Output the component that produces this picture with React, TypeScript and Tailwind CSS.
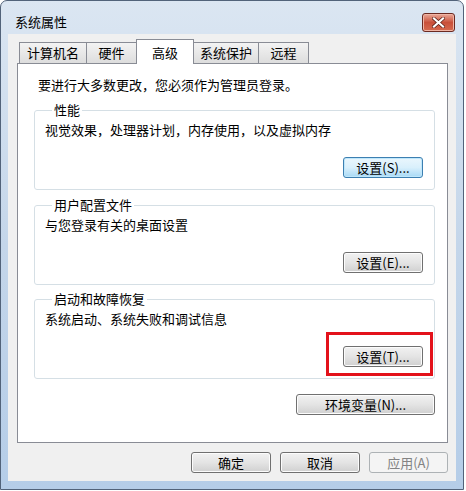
import type { ReactNode } from "react"

type BtnProps = {
  children: ReactNode
  variant?: "normal" | "default" | "disabled"
  className?: string
}

function Btn({ children, variant = "normal", className = "" }: BtnProps) {
  const look =
    variant === "default"
      ? "border-[#3c7fb1] bg-gradient-to-b from-[#eaf6fd] via-[#d9f0fc] to-[#a7d9f5] shadow-[inset_0_0_0_1px_#bfe7fb]"
      : variant === "disabled"
        ? "border-[#adb2b5] bg-[#f4f4f4] text-[#838383]"
        : "border-[#707070] bg-gradient-to-b from-[#f2f2f2] via-[#e4e4e4] to-[#d0d0d0] shadow-[inset_0_0_0_1px_#fcfcfc]"
  return (
    <div
      className={`h-[21px] flex items-center justify-center rounded-[3px] border leading-none ${look} ${className}`}
    >
      {children}
    </div>
  )
}

function Tab({ label, active = false, className = "" }: { label: string; active?: boolean; className?: string }) {
  if (active) {
    return (
      <div
        className={`relative z-10 -mb-px h-[25px] flex items-start justify-center pt-[3px] border border-b-0 border-[#898c95] bg-white ${className}`}
      >
        {label}
      </div>
    )
  }
  return (
    <div
      className={`h-[21px] flex items-center justify-center border border-b-0 border-[#898c95] bg-gradient-to-b from-[#f3f3f3] to-[#dddddd] ${className}`}
    >
      {label}
    </div>
  )
}

function Group({ title, desc, children }: { title: string; desc: string; children: ReactNode }) {
  return (
    <fieldset className="border border-[#d5dfe5] rounded-[3px] pl-[10px] pr-[11px] pt-[4px] pb-[11px]">
      <legend className="ml-[7px] px-[2px] leading-[16px]">{title}</legend>
      <div className="leading-[16px]">{desc}</div>
      <div className="mt-[19px] flex justify-end">{children}</div>
    </fieldset>
  )
}

export default function App() {
  return (
    <div className="w-[466px] h-[491px] bg-white text-[13px] text-black font-['Noto_Sans_CJK_SC','Noto_Sans',sans-serif]">
      <div className="w-[464px] h-[490px] flex flex-col rounded-t-[7px] border border-[#52637a] bg-gradient-to-b from-[#dbe6f2] via-[#c4d6ea] to-[#b5cde8] overflow-hidden">
        {/* title bar */}
        <div className="h-[34px] flex items-start justify-between pl-[14px] pr-[8px]">
          <span className="mt-[13px] leading-[16px]">系统属性</span>
          <div className="mt-[12px] w-[33px] h-[19px] flex items-center justify-center rounded-[3px] border border-[#6b2a22] bg-gradient-to-b from-[#e9a99a] via-[#c9503a] to-[#d66a4f] shadow-[inset_0_0_0_1px_#f0b5a5]">
            <svg width="13" height="11" viewBox="0 0 13 11">
              <path d="M2 1.5 L11 9.5 M11 1.5 L2 9.5" stroke="#5a1f16" strokeWidth="3.6" strokeLinecap="square" />
              <path d="M2 1.5 L11 9.5 M11 1.5 L2 9.5" stroke="#ffffff" strokeWidth="2.2" strokeLinecap="square" />
            </svg>
          </div>
        </div>

        {/* body */}
        <div className="flex-1 mx-[7px] mb-[8px] bg-[#f0f0f0] flex flex-col pl-[9px] pr-[8px] pt-[5px] pb-[8px]">
          <div className="h-[24px] flex items-end pl-[2px]">
            <Tab label="计算机名" className="w-[68px]" />
            <Tab label="硬件" className="w-[51px] -ml-px" />
            <Tab label="高级" active className="w-[58px] -ml-px" />
            <Tab label="系统保护" className="w-[66px] -ml-px" />
            <Tab label="远程" className="w-[51px] -ml-px" />
          </div>

          <div className="h-[380px] border border-[#898c95] bg-white pl-[16px] pr-[12px] pt-[13px]">
            <div className="pl-[4px] leading-[16px]">要进行大多数更改，您必须作为管理员登录。</div>

            <div className="mt-[9px]">
              <Group title="性能" desc="视觉效果，处理器计划，内存使用，以及虚拟内存">
                <Btn variant="default" className="w-[80px]">设置(S)...</Btn>
              </Group>
            </div>

            <div className="mt-[7px]">
              <Group title="用户配置文件" desc="与您登录有关的桌面设置">
                <Btn className="w-[80px]">设置(E)...</Btn>
              </Group>
            </div>

            <div className="mt-[6px]">
              <Group title="启动和故障恢复" desc="系统启动、系统失败和调试信息">
                <div className="relative">
                  <Btn className="w-[80px]">设置(T)...</Btn>
                  <div className="absolute -left-[17px] -right-[10px] -top-[14px] -bottom-[9px] border-[3px] border-[#e3121b]" />
                </div>
              </Group>
            </div>

            <div className="mt-[15px] flex justify-end">
              <Btn className="w-[139px]">环境变量(N)...</Btn>
            </div>
          </div>

          <div className="mt-[9px] flex justify-end gap-[9px]">
            <Btn className="w-[80px]">确定</Btn>
            <Btn className="w-[80px]">取消</Btn>
            <Btn variant="disabled" className="w-[79px]">应用(A)</Btn>
          </div>
        </div>
      </div>
    </div>
  )
}
